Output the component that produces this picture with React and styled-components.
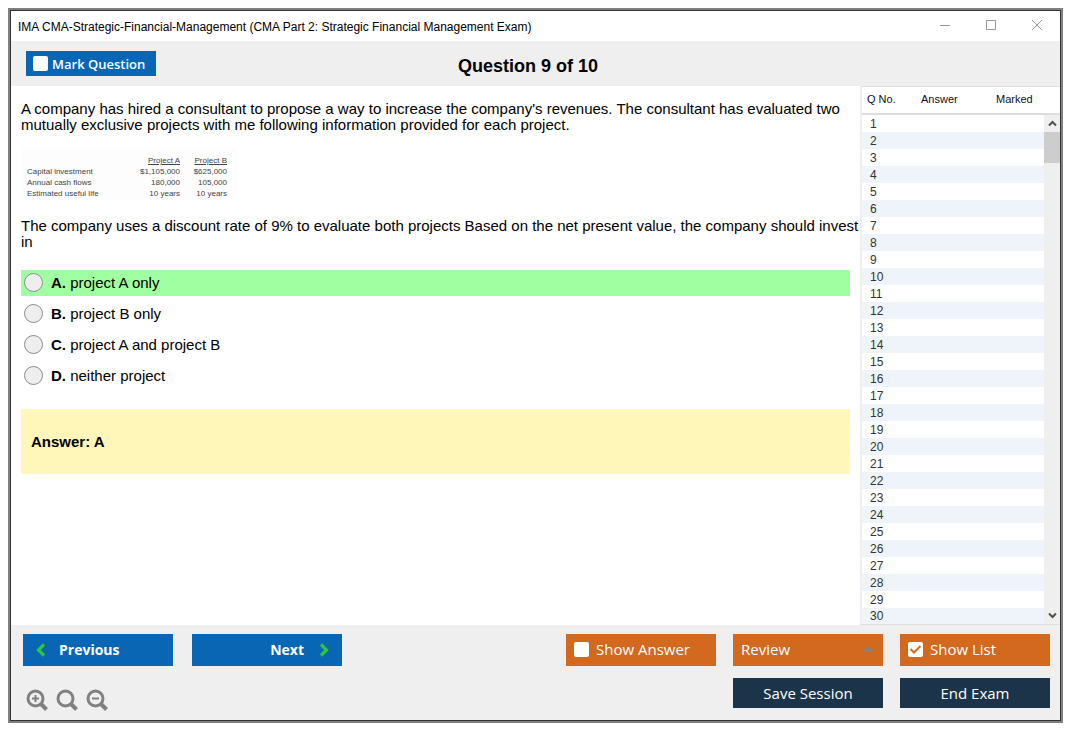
import React, { useState } from "react";
import styled, { createGlobalStyle } from "styled-components";

const options = [
  { key: "A", text: "project A only" },
  { key: "B", text: "project B only" },
  { key: "C", text: "project A and project B" },
  { key: "D", text: "neither project" },
];

const figures = [
  ["Capital investment", "$1,105,000", "$625,000"],
  ["Annual cash flows", "180,000", "105,000"],
  ["Estimated useful life", "10 years", "10 years"],
];

const questions = [...Array(30).keys()].map((x) => x + 1);
const correct = "A";

export default function App() {
  const [marked, setMarked] = useState(false);
  const [showAnswer, setShowAnswer] = useState(false);
  const [showList, setShowList] = useState(true);
  const [choice, setChoice] = useState("");

  return (
    <>
      <GlobalStyle />
      <Window>
        <TitleBar>
          <Title>
            IMA CMA-Strategic-Financial-Management (CMA Part 2: Strategic
            Financial Management Exam)
          </Title>
          <WindowButtons>
            <WindowButton aria-label="Minimize">
              <svg width="12" height="12" viewBox="0 0 12 12">
                <path d="M1 6.5h10" />
              </svg>
            </WindowButton>
            <WindowButton aria-label="Maximize">
              <svg width="12" height="12" viewBox="0 0 12 12">
                <path d="M1.500 1.500h9v9h-9z" />
              </svg>
            </WindowButton>
            <WindowButton aria-label="Close">
              <svg width="12" height="12" viewBox="0 0 12 12">
                <path d="M1 1l10 10M11 1L1 11" />
              </svg>
            </WindowButton>
          </WindowButtons>
        </TitleBar>

        <Header>
          <MarkLabel>
            <CheckBox
              type="checkbox"
              checked={marked}
              onChange={(e) => setMarked(e.target.checked)}
            />
            Mark Question
          </MarkLabel>
          <Heading>Question 9 of 10</Heading>
        </Header>

        <Body>
          <Main>
            <Paragraph>
              A company has hired a consultant to propose a way to increase the
              company's revenues. The consultant has evaluated two mutually
              exclusive projects with me following information provided for
              each project.
            </Paragraph>
            <Figures>
              <thead>
                <tr>
                  <td />
                  <th scope="col">Project A</th>
                  <th scope="col">Project B</th>
                </tr>
              </thead>
              <tbody>
                {figures.map(([label, a, b]) => (
                  <tr key={label}>
                    <td>{label}</td>
                    <td>{a}</td>
                    <td>{b}</td>
                  </tr>
                ))}
              </tbody>
            </Figures>
            <Paragraph>
              The company uses a discount rate of 9% to evaluate both projects
              Based on the net present value, the company should invest in
            </Paragraph>
            <Options>
              {options.map((option) => (
                <Option key={option.key} $correct={option.key === correct}>
                  <Radio
                    type="radio"
                    name="answer"
                    value={option.key}
                    checked={choice === option.key}
                    onChange={(e) => setChoice(e.target.value)}
                  />
                  <span>
                    <b>{option.key}.</b> {option.text}
                  </span>
                </Option>
              ))}
            </Options>
            <AnswerBox>Answer: {correct}</AnswerBox>
          </Main>

          {showList && (
            <Side>
              <List>
                <thead>
                  <tr>
                    <th scope="col">Q No.</th>
                    <th scope="col">Answer</th>
                    <th scope="col">Marked</th>
                  </tr>
                </thead>
                <tbody>
                  {questions.map((n) => (
                    <tr key={n}>
                      <td>{n}</td>
                      <td />
                      <td />
                    </tr>
                  ))}
                </tbody>
              </List>
              <Scroll>
                <ScrollCap />
                <ScrollButton aria-label="Scroll up">
                  <svg width="9" height="7" viewBox="0 0 9 7">
                    <path d="M1 5.500L4.500 2L8 5.500" />
                  </svg>
                </ScrollButton>
                <Thumb />
                <ScrollTrack />
                <ScrollButton aria-label="Scroll down">
                  <svg width="9" height="7" viewBox="0 0 9 7">
                    <path d="M1 1.500L4.500 5L8 1.500" />
                  </svg>
                </ScrollButton>
              </Scroll>
            </Side>
          )}
        </Body>

        <Footer>
          <FooterRow>
            <NavButtons>
              <NavButton>
                <Chevron d="M8 1.500L2.500 7L8 12.500" />
                Previous
              </NavButton>
              <NavButton $end>
                Next
                <Chevron d="M2 1.500L7.500 7L2 12.500" />
              </NavButton>
            </NavButtons>
            <Spacer />
            <OrangeLabel>
              <CheckBox
                type="checkbox"
                checked={showAnswer}
                onChange={(e) => setShowAnswer(e.target.checked)}
              />
              Show Answer
            </OrangeLabel>
            <ReviewButton aria-haspopup="menu">
              Review
              <svg width="12" height="6" viewBox="0 0 12 6">
                <path d="M6 0l6 6H0z" fill="#8d7f74" />
              </svg>
            </ReviewButton>
            <OrangeLabel>
              <CheckWrap>
                <CheckBox
                  type="checkbox"
                  checked={showList}
                  onChange={(e) => setShowList(e.target.checked)}
                />
                {showList && (
                  <svg width="15" height="15" viewBox="0 0 15 15">
                    <path d="M2.500 7L6 10.500L12.500 4" />
                  </svg>
                )}
              </CheckWrap>
              Show List
            </OrangeLabel>
          </FooterRow>
          <FooterRow>
            <ZoomButtons>
              <ZoomButton label="Zoom in" sign="M6 9.500h7M9.500 6v7" />
              <ZoomButton label="Reset zoom" />
              <ZoomButton label="Zoom out" sign="M6 9.500h7" />
            </ZoomButtons>
            <Spacer />
            <DarkButton>Save Session</DarkButton>
            <DarkButton>End Exam</DarkButton>
          </FooterRow>
        </Footer>
      </Window>
    </>
  );
}

function Chevron({ d }) {
  return (
    <svg width="10" height="14" viewBox="0 0 10 14" fill="none">
      <path d={d} stroke="#2fc63c" strokeWidth="3.2" />
    </svg>
  );
}

function ZoomButton({ label, sign }) {
  return (
    <IconButton aria-label={label}>
      <svg width="22" height="22" viewBox="0 0 22 22" fill="none">
        <circle cx="9.500" cy="9.500" r="7.500" strokeWidth="3" />
        <path d="M15 15l5.500 5.500" strokeWidth="4" />
        {sign && <path d={sign} strokeWidth="2" />}
      </svg>
    </IconButton>
  );
}

const GlobalStyle = createGlobalStyle`
  * {
    box-sizing: border-box;
  }
  body {
    margin: 0;
    background: #fff;
    color: #000;
    font-family: "Liberation Sans", Arial, sans-serif;
  }
  button {
    border: 0;
    padding: 0;
    cursor: pointer;
  }
`;

const Window = styled.div`
  display: flex;
  flex-direction: column;
  min-height: calc(100vh - 20px);
  margin: 8px 12px 12px 8px;
  border: 2px solid #808080;
  outline: 1px solid #333;
  outline-offset: -3px;
  padding: 1px;
`;

const TitleBar = styled.header`
  display: flex;
  justify-content: space-between;
  height: 30px;
  padding-left: 7px;
  font-size: 12px;
`;

const Title = styled.span`
  line-height: 32px;
`;

const WindowButtons = styled.div`
  display: flex;
`;

const WindowButton = styled.button`
  display: flex;
  justify-content: center;
  align-items: center;
  width: 46px;
  height: 28px;
  background: transparent;
  svg {
    fill: none;
    stroke: #999;
  }
`;

const Header = styled.div`
  display: grid;
  grid-template-columns: 1fr auto 1fr;
  align-items: center;
  height: 45px;
  padding: 0 30px 0 15px;
  background: #efefef;
`;

const MarkLabel = styled.label`
  display: flex;
  align-items: center;
  gap: 4px;
  width: 130px;
  height: 25px;
  padding-left: 7px;
  background: #0966b4;
  color: #fff;
  font-family: "Open Sans", "Noto Sans", sans-serif;
  font-size: 13px;
  font-weight: 600;
  white-space: nowrap;
`;

const CheckBox = styled.input`
  appearance: none;
  flex: none;
  width: 15px;
  height: 15px;
  margin: 0;
  border-radius: 2px;
  background: #fff;
`;

const CheckWrap = styled.span`
  display: grid;
  > * {
    grid-area: 1 / 1;
  }
  svg {
    pointer-events: none;
    fill: none;
    stroke: #d2691e;
    stroke-width: 2;
  }
`;

const Heading = styled.h1`
  margin: 4px 0 0;
  font-size: 18px;
  line-height: 20px;
`;

const Body = styled.div`
  display: flex;
  flex: 1;
`;

const Main = styled.main`
  flex: 1;
  padding: 15px 0 15px 10px;
  font-size: 15px;
  line-height: 16px;
`;

const Paragraph = styled.p`
  margin: 0;
`;

const Figures = styled.table`
  width: 216px;
  margin: 15px 0 19px;
  padding: 7px 10px 0 6px;
  border-spacing: 0;
  background: #fdfdfd;
  color: #444;
  font-size: 8px;
  line-height: 11px;
  td,
  th {
    padding: 0;
    text-align: right;
    font-weight: normal;
  }
  th {
    text-decoration: underline;
  }
  td:first-child {
    width: 104px;
    text-align: left;
  }
  th:last-child {
    width: 47px;
  }
`;

const Options = styled.div`
  display: flex;
  flex-direction: column;
  gap: 5px;
  margin: 20px 10px 20px 0;
`;

const Option = styled.label`
  display: flex;
  align-items: flex-start;
  gap: 8px;
  height: 26px;
  padding: 3px 3px 0;
  line-height: 20px;
  background: ${(props) => (props.$correct ? "#a0ffa0" : "transparent")};
`;

const Radio = styled.input`
  appearance: none;
  width: 19px;
  height: 19px;
  margin: 0;
  border: 1px solid #8c8c8c;
  border-radius: 50%;
  background: #eee;
  &:checked {
    box-shadow: inset 0 0 0 4px #eee;
    background: #333;
  }
`;

const AnswerBox = styled.div`
  margin-right: 10px;
  padding: 25px 10px 24px;
  background: #fef7b9;
  font-weight: bold;
`;

const Side = styled.aside`
  display: flex;
  align-items: flex-start;
  width: 200px;
  border-left: 2px solid #efefef;
  border-bottom: 1px solid #ddd;
`;

const List = styled.table`
  flex: 1;
  table-layout: fixed;
  border-spacing: 0;
  color: #333;
  font-size: 12px;
  th {
    height: 29px;
    padding: 0 0 2px 5px;
    border-top: 1px solid #ddd;
    border-bottom: 2px solid #ddd;
    color: #111;
    font-size: 11px;
    font-weight: normal;
    text-align: left;
  }
  th:nth-child(1) {
    width: 54px;
  }
  th:nth-child(2) {
    width: 75px;
  }
  td {
    height: 17px;
    padding: 0 0 0 8px;
    line-height: 16px;
  }
  tbody tr:nth-child(even) {
    background: #eef4f9;
  }
  tbody tr:last-child td {
    height: 16px;
  }
`;

const Scroll = styled.div`
  display: flex;
  flex-direction: column;
  align-self: stretch;
  width: 16px;
  background: #efefef;
`;

const ScrollCap = styled.div`
  height: 29px;
  border-top: 1px solid #ddd;
  border-bottom: 2px solid #ddd;
  background: #fff;
`;

const ScrollButton = styled.button`
  display: flex;
  justify-content: center;
  align-items: center;
  height: 17px;
  background: transparent;
  svg {
    fill: none;
    stroke: #505050;
    stroke-width: 2;
  }
`;

const Thumb = styled.div`
  height: 31px;
  background: #cdcdcd;
`;

const ScrollTrack = styled.div`
  flex: 1;
`;

const Footer = styled.footer`
  display: flex;
  flex-direction: column;
  gap: 12px;
  padding: 9px 10px 9px 12px;
  background: #efefef;
`;

const FooterRow = styled.div`
  display: flex;
  gap: 17px;
  align-items: flex-start;
`;

const Spacer = styled.div`
  flex: 1;
`;

const FooterButton = styled.button`
  display: flex;
  align-items: center;
  width: 150px;
  height: 32px;
  color: #fff;
  font-family: "Open Sans", "Noto Sans", sans-serif;
  font-size: 15px;
  line-height: 20px;
`;

const NavButtons = styled.div`
  display: flex;
  gap: 19px;
`;

const NavButton = styled(FooterButton)`
  justify-content: ${(props) => (props.$end ? "flex-end" : "flex-start")};
  gap: ${(props) => (props.$end ? "15px" : "13px")};
  padding: 0 13px;
  background: #0966b4;
  font-weight: bold;
  font-size: 14px;
`;

const OrangeLabel = styled(FooterButton).attrs({ as: "label" })`
  gap: 7px;
  padding: 0 8px 2px;
  background: #d2691e;
`;

const ReviewButton = styled(FooterButton)`
  justify-content: space-between;
  padding: 0 9px 2px 8px;
  background: #d2691e;
`;

const DarkButton = styled(FooterButton)`
  justify-content: center;
  height: 30px;
  background: #1b3449;
`;

const ZoomButtons = styled.div`
  display: flex;
  gap: 8px;
  padding: 11px 0 0 3px;
`;

const IconButton = styled.button`
  display: flex;
  background: transparent;
  svg {
    stroke: #808080;
  }
`;
